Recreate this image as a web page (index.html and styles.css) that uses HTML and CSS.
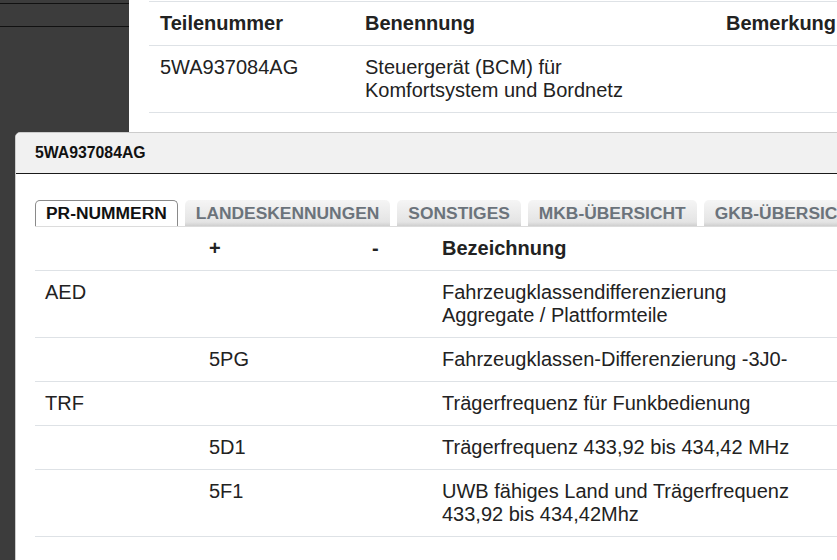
FILE: index.html
```html
<!DOCTYPE html>
<html lang="de">
<head>
    <meta charset="UTF-8">
    <meta name="viewport" content="width=device-width, initial-scale=1.0">
    <title>Teilenummer 5WA937084AG</title>
    <link rel="stylesheet" href="styles.css">
</head>
<body>
    <div class="layout">
        <aside class="sidebar">
            <div class="sidebar-top"></div>
            <div class="sidebar-row"></div>
        </aside>

        <main class="main">
            <table class="parts">
                <thead>
                    <tr>
                        <th class="col-nr">Teilenummer</th>
                        <th class="col-name">Benennung</th>
                        <th>Bemerkung</th>
                    </tr>
                </thead>
                <tbody>
                    <tr>
                        <td>5WA937084AG</td>
                        <td>Steuergerät (BCM) für<br>Komfortsystem und Bordnetz</td>
                        <td></td>
                    </tr>
                </tbody>
            </table>
        </main>
    </div>

    <div class="dialog">
        <div class="dialog-header">5WA937084AG</div>
        <div class="dialog-body">
            <ul class="tabs">
                <li class="tab active">PR-NUMMERN</li>
                <li class="tab">LANDESKENNUNGEN</li>
                <li class="tab">SONSTIGES</li>
                <li class="tab">MKB-ÜBERSICHT</li>
                <li class="tab">GKB-ÜBERSICHT</li>
            </ul>

            <table class="pr-table">
                <thead>
                    <tr>
                        <th class="col-fam"></th>
                        <th class="col-plus">+</th>
                        <th class="col-minus">-</th>
                        <th>Bezeichnung</th>
                    </tr>
                </thead>
                <tbody>
                    <tr>
                        <td>AED</td>
                        <td></td>
                        <td></td>
                        <td>Fahrzeugklassendifferenzierung<br>Aggregate / Plattformteile</td>
                    </tr>
                    <tr>
                        <td></td>
                        <td>5PG</td>
                        <td></td>
                        <td>Fahrzeugklassen-Differenzierung -3J0-</td>
                    </tr>
                    <tr>
                        <td>TRF</td>
                        <td></td>
                        <td></td>
                        <td>Trägerfrequenz für Funkbedienung</td>
                    </tr>
                    <tr>
                        <td></td>
                        <td>5D1</td>
                        <td></td>
                        <td>Trägerfrequenz 433,92 bis 434,42 MHz</td>
                    </tr>
                    <tr>
                        <td></td>
                        <td>5F1</td>
                        <td></td>
                        <td>UWB fähiges Land und Trägerfrequenz<br>433,92 bis 434,42Mhz</td>
                    </tr>
                </tbody>
            </table>
        </div>
    </div>
</body>
</html>
```

FILE: styles.css
```css
html, body {
    margin: 0;
    padding: 0;
    height: 100%;
    overflow: hidden;
}
body {
    font-family: "Liberation Sans", Arial, sans-serif;
    color: #222;
    background-color: #fff;
    position: relative;
}
.layout {
    display: flex;
    height: 100%;
}
.sidebar {
    width: 129px;
    flex-shrink: 0;
    background-color: #3c3c3c;
}
.sidebar-top {
    height: 3px;
    border-bottom: 1px solid #111;
}
.sidebar-row {
    height: 22px;
    border-bottom: 1px solid #111;
}
.main {
    flex: 1;
    padding: 1px 0 0 20px;
}
table {
    border-collapse: collapse;
    font-size: 20px;
    line-height: 23px;
}
th, td {
    text-align: left;
    vertical-align: top;
    padding: 10px 10px 10px 11px;
    border-bottom: 1px solid #dee2e6;
}
th {
    font-weight: bold;
}
.parts {
    width: 760px;
    border-top: 1px solid #dee2e6;
}
.parts .col-nr {
    width: 184px;
}
.parts .col-name {
    width: 340px;
}

/* modal window */
.dialog {
    position: absolute;
    left: 15px;
    top: 132px;
    width: 900px;
    bottom: -20px;
    background-color: #fff;
    border: 1px solid #ccc;
    border-radius: 5px 0 0 0;
}
.dialog-header {
    height: 40px;
    line-height: 40px;
    padding-left: 19px;
    background-color: #f1f1f1;
    border-bottom: 1px solid #1a1a1a;
    border-radius: 5px 0 0 0;
    font-size: 15.8px;
    font-weight: bold;
    color: #111;
}
.dialog-body {
    padding: 26px 0 0 19px;
}
.tabs {
    list-style: none;
    margin: 0;
    padding: 0;
    display: flex;
    gap: 7px;
    border-bottom: 1px solid #dcdcdc;
    white-space: nowrap;
}
.tab {
    padding: 3px 11px 3px 11px;
    font-size: 17.4px;
    line-height: 20px;
    font-weight: bold;
    color: #6b737b;
    background: linear-gradient(#f5f5f5, #e4e4e4 85%, #cfcfcf);
    border-radius: 5px 5px 0 0;
}
.tab.active {
    color: #111;
    background: #fff;
    border: 1px solid #8a8a8a;
    border-bottom: none;
    padding: 2px 10px 3px 10px;
}
.pr-table {
    width: 820px;
}
.pr-table th, .pr-table td {
    padding-left: 10px;
}
.pr-table .col-fam {
    width: 144px;
}
.pr-table .col-plus {
    width: 143px;
}
.pr-table .col-minus {
    width: 50px;
}
```
